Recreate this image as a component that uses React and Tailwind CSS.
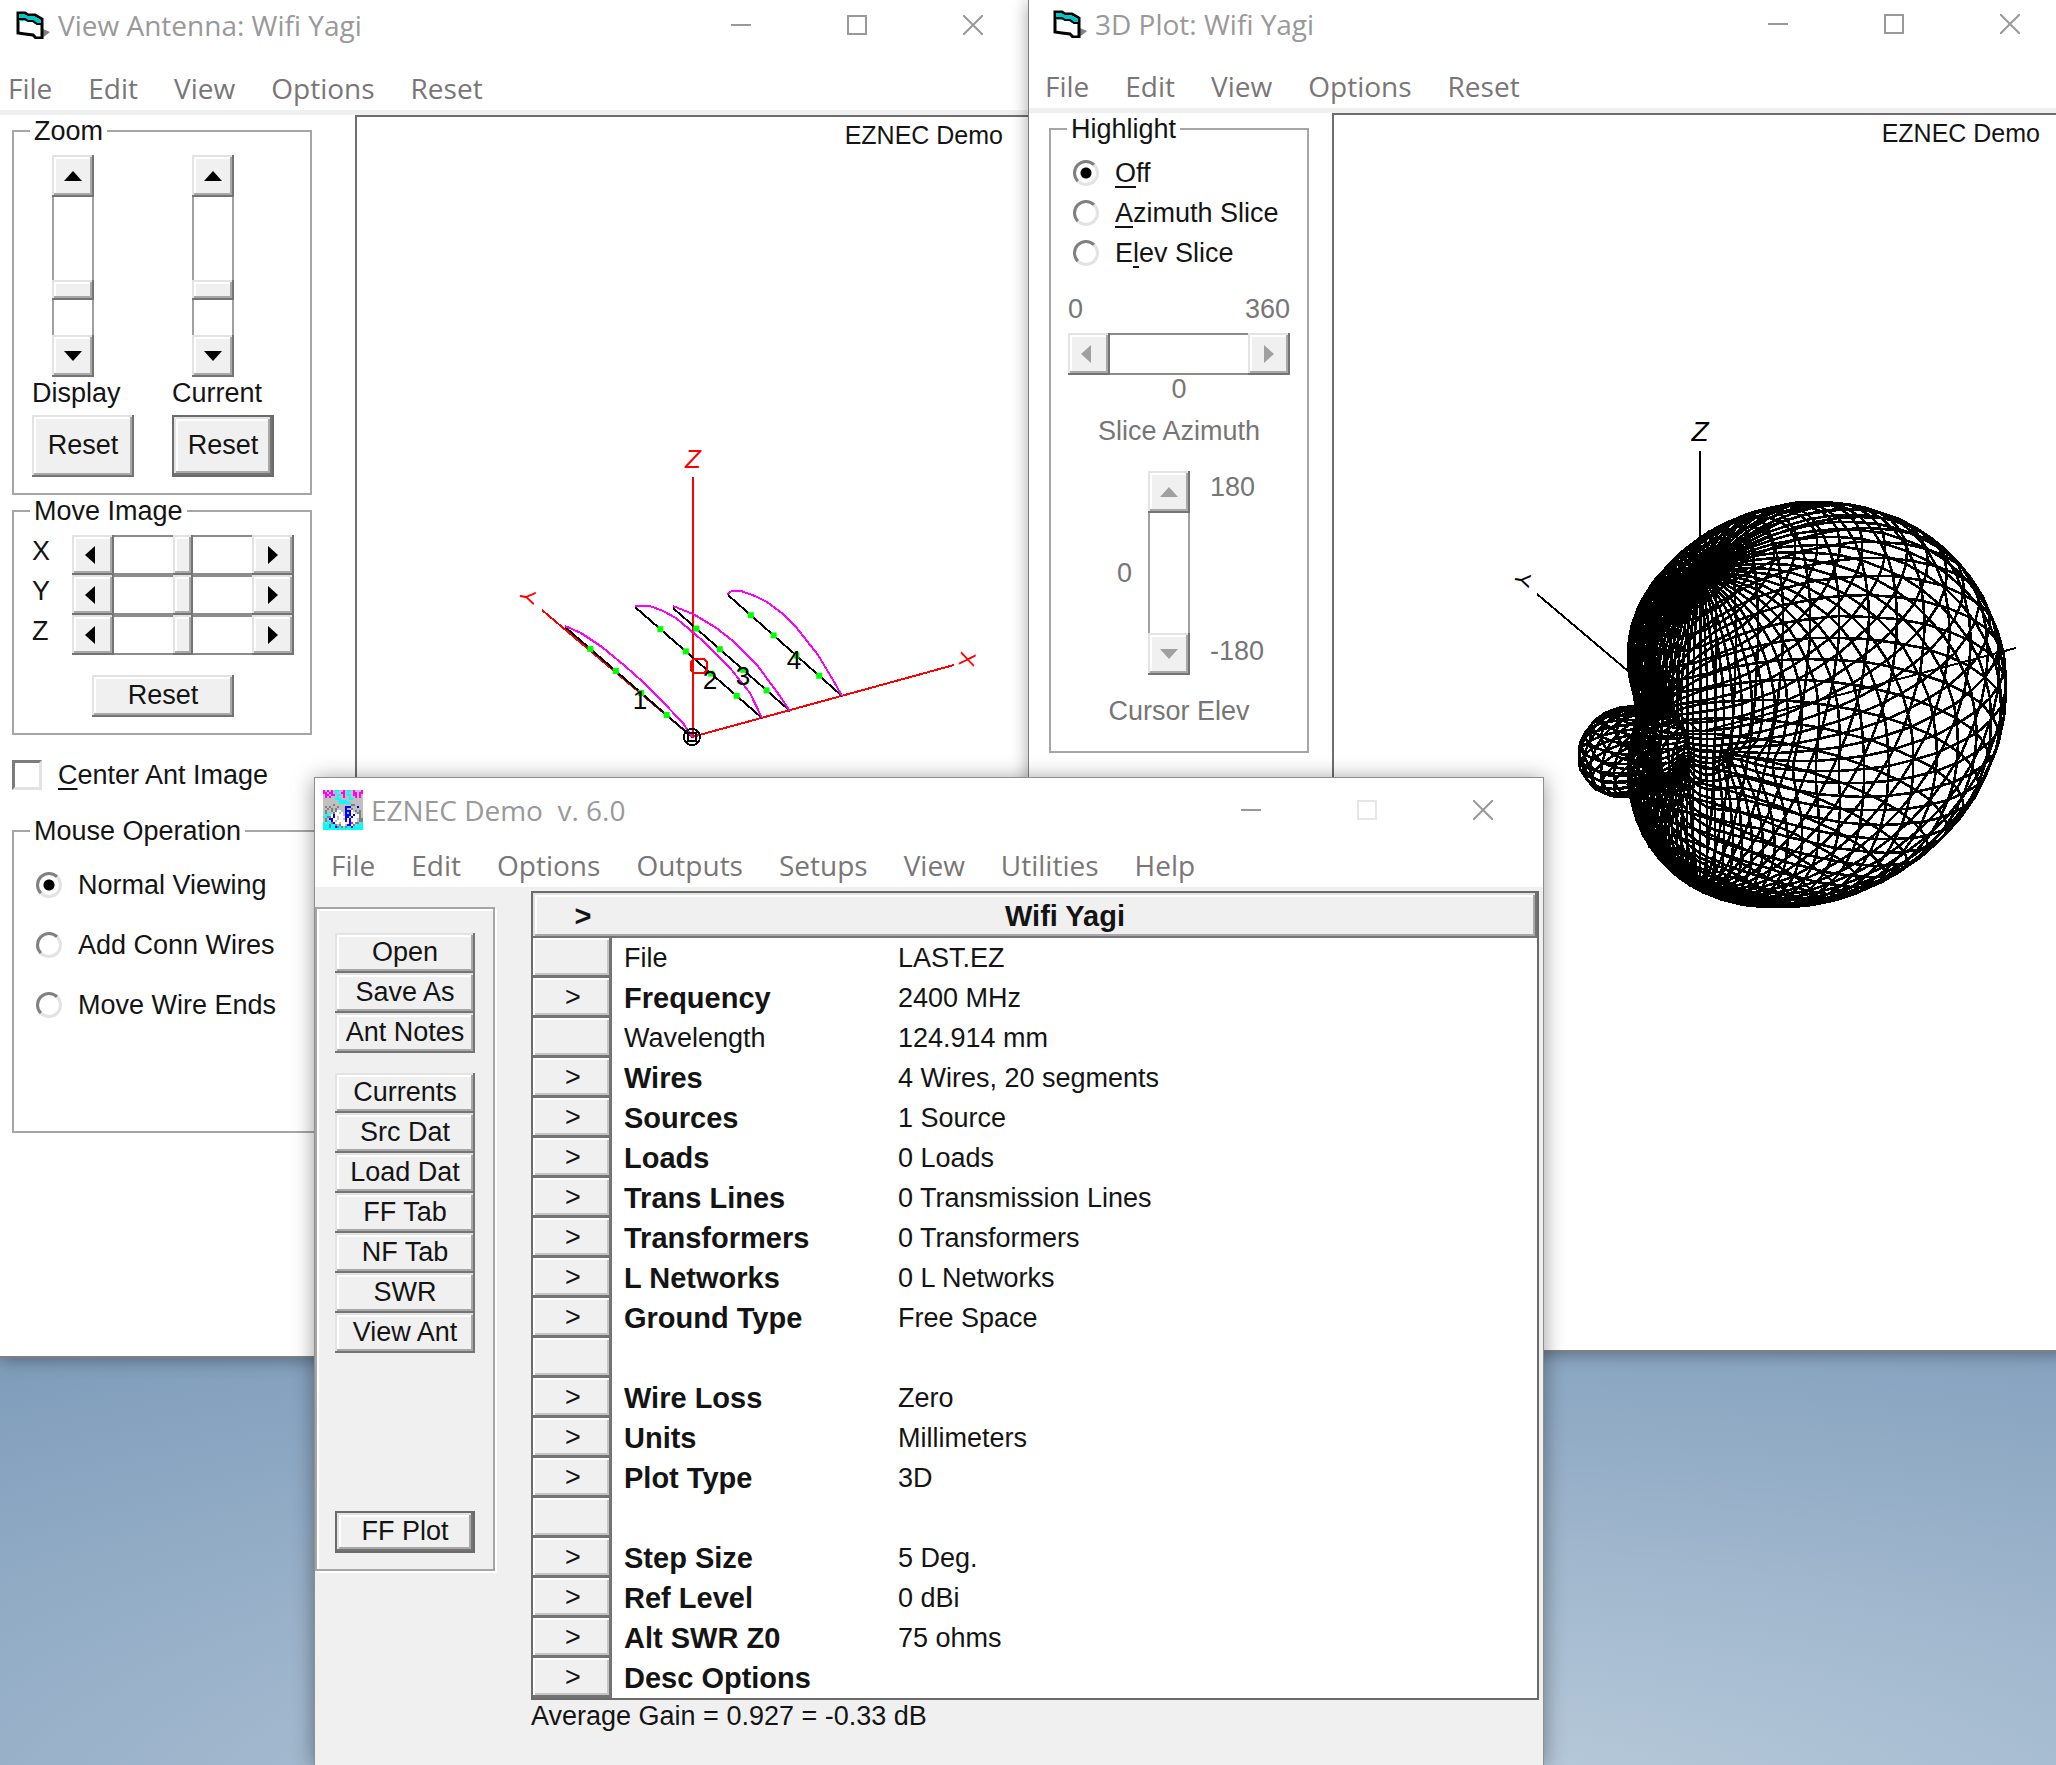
import { clsx } from 'clsx';

const RAISED =
  'bg-[#f0f0f0] shadow-[inset_-2px_-2px_#747474,inset_2px_2px_#e3e3e3,inset_-4px_-4px_#a8a8a8,inset_4px_4px_#ffffff]';

const ARROWS = {
  up: '0,10 9,0 18,10',
  down: '0,0 18,0 9,10',
  left: '10,0 10,18 0,9',
  right: '0,0 10,9 0,18',
};

const SETTINGS = [
  { name: 'File', value: 'LAST.EZ', plain: true },
  { name: 'Frequency', value: '2400 MHz' },
  { name: 'Wavelength', value: '124.914 mm', plain: true },
  { name: 'Wires', value: '4 Wires, 20 segments' },
  { name: 'Sources', value: '1 Source' },
  { name: 'Loads', value: '0 Loads' },
  { name: 'Trans Lines', value: '0 Transmission Lines' },
  { name: 'Transformers', value: '0 Transformers' },
  { name: 'L Networks', value: '0 L Networks' },
  { name: 'Ground Type', value: 'Free Space' },
  { name: '', value: '', plain: true },
  { name: 'Wire Loss', value: 'Zero' },
  { name: 'Units', value: 'Millimeters' },
  { name: 'Plot Type', value: '3D' },
  { name: '', value: '', plain: true },
  { name: 'Step Size', value: '5 Deg.' },
  { name: 'Ref Level', value: '0 dBi' },
  { name: 'Alt SWR Z0', value: '75 ohms' },
  { name: 'Desc Options', value: '' },
];

function FormIcon() {
  return (
    <svg className="h-7 w-[34px] shrink-0" viewBox="0 0 34 28" aria-hidden="true">
      <path d="M27 18l7 3-5 4-3 2z" fill="#808080" />
      <path d="M2 2h7l3 2h7l7 4v19h-6l-3-3-8-1-7-1z" fill="#fff" stroke="#000" strokeWidth="3" />
      <path d="M3 3h5l4 2h6l7 4v4h-6l-3-2-7-1H3z" fill="#00c8c8" />
      <path d="M3 8h6l3 2h5l4 3h5" fill="none" stroke="#000" strokeWidth="2" />
    </svg>
  );
}

// 20x20 bitmap, one letter per colour
const ICON_ROWS = [
  'MgMgMgCCggMgCCgMgggM',
  'MMgMMgCggMMgCggMMgMM',
  'gMMgMMgCCgMgCCgMMgMg',
  'gMgMgggCggMggCggMgMg',
  'ggggggCCCggggCCggggg',
  'ggggggggCCCCgggggggg',
  'ggggggggCCCCCCgggggg',
  'gggggdggggggggddgggg',
  'gdgdgggdgggBBBgggBgg',
  'ggdgdgdggggBggdggggg',
  'gdggdgdwwggBBBwgdgdg',
  'gdgCgdwwgwgBgBwwgddg',
  'gCCgwBwwwwgBBBwBwwdg',
  'CCddwBwgwwwBBgBwwwdg',
  'gdgBBwwgwwgBwBwwwgdd',
  'gdCgBwgwwwwBwBwwwgdd',
  'CgCCdBwwgwwwwBMwddgC',
  'CCCdCCdgdwwgBBwdgCCC',
  'CCCdCCBdCdgdCCBCCCCC',
  'CCCCCCCCCCCCCCCCCCCC',
];
const ICON_COLORS = { M: '#ff00ff', C: '#00ffff', B: '#0000ff', w: '#ffffff', d: '#808080' };

function EznecIcon() {
  return (
    <svg className="size-10 shrink-0" viewBox="0 0 20 20" shapeRendering="crispEdges" aria-hidden="true">
      <rect width="20" height="20" fill="#c0c0c0" />
      {ICON_ROWS.flatMap((row, y) =>
        [...row].map((c, x) =>
          ICON_COLORS[c] ? <rect key={`${x}-${y}`} x={x} y={y} width="1" height="1" fill={ICON_COLORS[c]} /> : null
        )
      )}
    </svg>
  );
}

function TitleBar({ icon, title, className, maxDisabled }) {
  const button = 'flex w-[116px] items-center justify-center';
  return (
    <header className={clsx('flex items-stretch whitespace-pre text-[28px] leading-9 text-[#999999]', className)}>
      <h1 className="flex flex-1 items-center gap-2 font-['Open_Sans',sans-serif] font-normal">
        {icon}
        {title}
      </h1>
      <button type="button" aria-label="Minimize" className={button}>
        <svg className="size-5" viewBox="0 0 20 20" stroke="currentColor" strokeWidth="2">
          <path d="M0 10h20" />
        </svg>
      </button>
      <button
        type="button"
        aria-label="Maximize"
        disabled={maxDisabled}
        className={clsx(button, maxDisabled && 'text-[#e6e6e6]')}
      >
        <svg className="size-5" viewBox="0 0 20 20" fill="none" stroke="currentColor" strokeWidth="2">
          <path d="M1 1h18v18H1z" />
        </svg>
      </button>
      <button type="button" aria-label="Close" className={button}>
        <svg className="size-5" viewBox="0 0 20 20" stroke="currentColor" strokeWidth="2">
          <path d="M0 0l20 20M20 0L0 20" />
        </svg>
      </button>
    </header>
  );
}

function MenuBar({ items, className }) {
  return (
    <nav className={clsx("flex items-center gap-9 font-['Open_Sans',sans-serif] text-[28px] leading-9 text-[#7a7678]", className)}>
      {items.map((item) => (
        <button key={item} type="button">
          {item}
        </button>
      ))}
    </nav>
  );
}

function Group({ legend, className, children }) {
  return (
    <fieldset className={clsx('border-2 border-[#a6a6a6]', className)}>
      <legend className="ml-4 px-1 leading-8">{legend}</legend>
      {children}
    </fieldset>
  );
}

function PushButton({ children, focused, className }) {
  return (
    <button type="button" className={clsx(RAISED, 'pb-0.5', focused && 'border-2 border-[#6b6b6b]', className)}>
      {children}
    </button>
  );
}

function ArrowButton({ dir, disabled, label, className }) {
  const vertical = dir === 'up' || dir === 'down';
  return (
    <button
      type="button"
      aria-label={label}
      disabled={disabled}
      className={clsx(RAISED, 'flex shrink-0 items-center justify-center', className, disabled ? 'text-[#a0a0a0]' : 'text-black')}
    >
      <svg className={vertical ? 'h-2.5 w-[18px]' : 'h-[18px] w-2.5'} fill="currentColor">
        <polygon points={ARROWS[dir]} />
      </svg>
    </button>
  );
}

const THUMB =
  '[&::-webkit-slider-thumb]:appearance-none [&::-webkit-slider-thumb]:bg-[#f0f0f0] [&::-webkit-slider-thumb]:shadow-[inset_-2px_-2px_#747474,inset_2px_2px_#e3e3e3,inset_-4px_-4px_#a8a8a8,inset_4px_4px_#ffffff]';
const NO_THUMB = '[&::-webkit-slider-thumb]:appearance-none [&::-webkit-slider-thumb]:opacity-0';

function VScroll({ label, value, disabled, className }) {
  return (
    <div className={clsx('flex w-[42px] flex-col bg-white shadow-[inset_2px_0_#a0a0a0,inset_-2px_0_#a0a0a0]', className)}>
      <ArrowButton dir="up" label={`${label} up`} disabled={disabled} className="h-[42px] w-full" />
      <input
        type="range"
        aria-label={label}
        defaultValue={value}
        disabled={disabled}
        className={clsx(
          'min-h-0 w-full flex-1 appearance-none bg-transparent [writing-mode:vertical-lr] [&::-webkit-slider-thumb]:h-5 [&::-webkit-slider-thumb]:w-[42px]',
          disabled ? NO_THUMB : THUMB
        )}
      />
      <ArrowButton dir="down" label={`${label} down`} disabled={disabled} className="h-[42px] w-full" />
    </div>
  );
}

function HScroll({ label, value, disabled, className }) {
  return (
    <div className={clsx('flex w-[222px]', className)}>
      <ArrowButton dir="left" label={`${label} left`} disabled={disabled} className="h-full w-[42px] pr-1.5" />
      <input
        type="range"
        aria-label={label}
        defaultValue={value}
        disabled={disabled}
        className={clsx(
          'h-full min-w-0 flex-1 appearance-none border-y-2 border-[#8c8c8c] bg-white [&::-webkit-slider-thumb]:h-10 [&::-webkit-slider-thumb]:w-5',
          disabled ? NO_THUMB : THUMB
        )}
      />
      <ArrowButton dir="right" label={`${label} right`} disabled={disabled} className="h-full w-[42px]" />
    </div>
  );
}

function Radio({ name, checked, children, className }) {
  return (
    <label className={clsx('flex items-center gap-4 whitespace-nowrap pl-1', className)}>
      <input
        type="radio"
        name={name}
        defaultChecked={checked}
        className="size-[26px] shrink-0 appearance-none rounded-full border-3 border-t-[#808080] border-r-[#e3e3e3] border-b-[#e3e3e3] border-l-[#808080] checked:bg-[radial-gradient(circle,#000_5px,transparent_6px)]"
      />
      <span>{children}</span>
    </label>
  );
}

const WIRES = [
  { from: [565, 628], to: [692, 738], current: '565,627 581,634 602,648 625,667 643,683 659,699 683,724 692,738' },
  { from: [635, 608], to: [762, 719], current: '635,607 650,607 663,612 676,619 703,642 730,669 750,694 762,719' },
  { from: [673, 609], to: [790, 712], current: '673,607 693,615 715,628 733,642 757,666 777,693 790,712' },
  { from: [728, 596], to: [842, 697], current: '727,595 732,592 741,592 755,597 767,603 783,615 796,628 818,656 833,681 842,697' },
];

function AntennaDrawing() {
  return (
    <svg className="h-[660px] w-[670px]" viewBox="357 118 670 660" aria-label="Antenna wires and currents">
      <g fill="none" strokeWidth="2" shapeRendering="crispEdges">
        <path d="M693 738V478M692 738L954 666M692 738L542 611" stroke="#ff0000" />
        {WIRES.map(({ from, to, current }) => (
          <g key={current}>
            <path d={`M${from}L${to}`} stroke="#000" />
            <polyline points={current} stroke="#ff00ff" />
          </g>
        ))}
        <path d="M694 660h10l3 3v8l-3 3h-10l-3-3v-8z" stroke="#ff0000" />
        <circle cx="692" cy="738" r="8" stroke="#000" />
        <path d="M688 734h8v8h-8z" stroke="#000" />
      </g>
      {WIRES.flatMap(({ from, to }, i) =>
        [0.2, 0.4, 0.6, 0.8].map((t) => (
          <rect
            key={`${i}-${t}`}
            x={from[0] + (to[0] - from[0]) * t - 3}
            y={from[1] + (to[1] - from[1]) * t - 3}
            width="6"
            height="6"
            fill="#00ff00"
          />
        ))
      )}
      <g fontSize="26" textAnchor="middle">
        <text x="640" y="710">1</text>
        <text x="710" y="690">2</text>
        <text x="743" y="686">3</text>
        <text x="794" y="670">4</text>
      </g>
      <g fontSize="26" textAnchor="middle" fill="#ff0000">
        <text x="693" y="469" fontStyle="italic">Z</text>
        <text transform="translate(520 597) rotate(100)" fontSize="22">Y</text>
        <text transform="translate(960 659) rotate(100)" fontSize="22">X</text>
      </g>
    </svg>
  );
}

// Far-field surface sampled every 5 degrees, projected orthographically
const STEP = 5;
const RADIUS = 331;
const ORIGIN = [1700, 732];

function project(az, el) {
  const a = (az * Math.PI) / 180;
  const e = (el * Math.PI) / 180;
  const x = Math.cos(e) * Math.cos(a);
  const y = Math.cos(e) * Math.sin(a);
  const z = Math.sin(e);
  const broadside = Math.sqrt(Math.max(1 - y * y, 1e-6));
  // the constants keep the nulls from closing completely
  const element = Math.hypot(Math.cos((Math.PI / 2) * y) / broadside, 0.12);
  const array = Math.hypot(0.295 + 0.39 * x + 0.12 * x ** 2 + 0.19 * x ** 3, 0.05 * (1 - x * x));
  const r = RADIUS * Math.sqrt(element * array);
  return [
    Math.round(ORIGIN[0] + r * (0.868 * x - 0.497 * y)),
    Math.round(ORIGIN[1] - r * (0.24 * x + 0.42 * y + 0.86 * z)),
  ];
}

function buildMesh() {
  const lines = [];
  for (let el = -90 + STEP; el < 90; el += STEP) {
    const ring = [];
    for (let az = 0; az < 360; az += STEP) ring.push(project(az, el).join(' '));
    lines.push(`M${ring.join('L')}Z`);
  }
  for (let az = 0; az < 360; az += STEP) {
    const rib = [];
    for (let el = -90; el <= 90; el += STEP) rib.push(project(az, el).join(' '));
    lines.push(`M${rib.join('L')}`);
  }
  return lines.join('');
}

const MESH = buildMesh();

function FarFieldDrawing() {
  return (
    <svg className="h-[900px] w-[710px]" viewBox="1334 115 710 900" aria-label="3D far field pattern">
      <g fill="none" stroke="#000" shapeRendering="crispEdges">
        <path d="M1700 732V451M1700 732L1537 594M1700 732L2016 648" strokeWidth="2" />
        <path d={MESH} strokeWidth="2.6" />
      </g>
      <g fontSize="28" textAnchor="middle">
        <text x="1700" y="441" fontStyle="italic">Z</text>
        <text transform="translate(1515 579) rotate(100)" fontSize="22">Y</text>
      </g>
    </svg>
  );
}

function Canvas({ children, className }) {
  return (
    <section className="relative min-w-0 flex-1 overflow-hidden border-t-2 border-l-2 border-[#6e6e6e] bg-white">
      <p className={clsx('absolute top-0.5 text-[25px] leading-8', className)}>EZNEC Demo</p>
      {children}
    </section>
  );
}

function ViewAntennaWindow() {
  return (
    <section className="absolute top-0 left-0 w-[calc(50%+3px)] border-b-2 border-[#808080] bg-white shadow-[0_2px_16px_rgba(0,0,0,0.35)]">
      <TitleBar icon={<FormIcon />} title="View Antenna: Wifi Yagi" className="h-[50px] pl-4" />
      <MenuBar items={['File', 'Edit', 'View', 'Options', 'Reset']} className="h-15 pt-4 pl-2" />
      <div className="flex min-h-[1246px] border-t-[5px] border-[#f0f0f0]">
        <div className="w-[355px] shrink-0 pl-3">
          <Group legend="Zoom" className="w-[300px] pb-4">
            <div className="mt-2 flex gap-[38px] px-[18px]">
              <div className="flex flex-col">
                <VScroll label="Display zoom" value={70} className="ml-5 h-[222px]" />
                <p className="leading-8">Display</p>
                <PushButton className="mt-1.5 h-[62px] w-[102px]">Reset</PushButton>
              </div>
              <div className="flex flex-col">
                <VScroll label="Current zoom" value={70} className="ml-5 h-[222px]" />
                <p className="leading-8">Current</p>
                <PushButton focused className="mt-1.5 h-[62px] w-[102px]">Reset</PushButton>
              </div>
            </div>
          </Group>
          <Group legend="Move Image" className="w-[300px] pb-4">
            <div className="mt-2 pl-[18px]">
              {['X', 'Y', 'Z'].map((axis) => (
                <div key={axis} className="flex h-10">
                  <span className="w-10 leading-8">{axis}</span>
                  <HScroll label={`Move ${axis}`} value={50} />
                </div>
              ))}
              <PushButton className="mt-5 ml-15 block h-[42px] w-[142px]">Reset</PushButton>
            </div>
          </Group>
          <label className="mt-6 flex items-center gap-4">
            <input
              type="checkbox"
              className="size-[30px] appearance-none border-3 border-t-[#7c7c7c] border-r-[#e3e3e3] border-b-[#e3e3e3] border-l-[#7c7c7c] bg-white"
            />
            <span>
              <u className="underline-offset-4">C</u>enter Ant Image
            </span>
          </label>
          <Group legend="Mouse Operation" className="mt-6 w-[340px] pb-24">
            <div className="mt-2 pl-[18px]">
              <Radio name="mouse" checked className="h-15">Normal Viewing</Radio>
              <Radio name="mouse" className="h-15">Add Conn Wires</Radio>
              <Radio name="mouse" className="h-15">Move Wire Ends</Radio>
            </div>
          </Group>
        </div>
        <Canvas className="right-7">
          <AntennaDrawing />
        </Canvas>
      </div>
    </section>
  );
}

function PlotWindow() {
  return (
    <section className="absolute top-0 -right-3 left-1/2 border-b-2 border-l border-[#808080] bg-white shadow-[0_2px_16px_rgba(0,0,0,0.35)]">
      <TitleBar icon={<FormIcon />} title="3D Plot: Wifi Yagi" className="h-12 pl-6" />
      <MenuBar items={['File', 'Edit', 'View', 'Options', 'Reset']} className="h-15 pt-4 pl-4" />
      <div className="flex min-h-[1242px] border-t-[5px] border-[#f0f0f0]">
        <div className="w-[303px] shrink-0 pl-5">
          <Group legend="Highlight" className="w-[260px] pb-6">
            <div className="mt-2 pl-[18px]">
              <Radio name="highlight" checked className="h-10">
                <u className="underline-offset-4">O</u>ff
              </Radio>
              <Radio name="highlight" className="h-10">
                <u className="underline-offset-4">A</u>zimuth Slice
              </Radio>
              <Radio name="highlight" className="h-10">
                E<u className="underline-offset-4">l</u>ev Slice
              </Radio>
            </div>
            <div className="px-[17px] text-[#767676]">
              <div className="mt-5 flex justify-between leading-8">
                <span>0</span>
                <span>360</span>
              </div>
              <HScroll label="Slice azimuth" value={0} disabled className="mt-2 h-[42px]" />
              <p className="text-center leading-7">0</p>
              <p className="mt-3 text-center leading-8">Slice Azimuth</p>
              <div className="mt-6 flex h-[204px]">
                <span className="w-20 self-center pr-4 text-right">0</span>
                <VScroll label="Cursor elevation" value={50} disabled />
                <div className="flex flex-col justify-between pb-2 pl-5 leading-8">
                  <span>180</span>
                  <span>-180</span>
                </div>
              </div>
              <p className="mt-5 text-center leading-8">Cursor Elev</p>
            </div>
          </Group>
        </div>
        <Canvas className="right-7">
          <FarFieldDrawing />
        </Canvas>
      </div>
    </section>
  );
}

function ButtonStack({ items, className }) {
  return (
    <div className={clsx('flex flex-col', className)}>
      {items.map((item) => (
        <PushButton key={item} className="h-10 w-full">
          {item}
        </PushButton>
      ))}
    </div>
  );
}

function SettingsTable() {
  return (
    <table className="w-full table-fixed border-collapse border-2 border-[#6b6b6b] bg-white text-left">
      <colgroup>
        <col className="w-20" />
        <col className="w-[274px]" />
        <col />
      </colgroup>
      <thead>
        <tr>
          <th colSpan={3} className="p-0">
            <button type="button" className={clsx(RAISED, 'flex h-[45px] w-full items-center text-[29px] font-bold')}>
              <span className="w-[100px]">&gt;</span>
              <span className="flex-1 pr-10">Wifi Yagi</span>
            </button>
          </th>
        </tr>
      </thead>
      <tbody>
        {SETTINGS.map(({ name, value, plain }, i) => (
          <tr key={i} className="h-10">
            <td className="p-0">
              <button
                type="button"
                aria-label={name || 'Blank'}
                className="block h-10 w-full border-r-3 border-b-3 border-[#747474] bg-[#f0f0f0] pl-1 shadow-[inset_2px_2px_#ffffff,inset_-2px_-2px_#c4c4c4]"
              >
                {plain ? '' : '>'}
              </button>
            </td>
            <th scope="row" className={clsx('py-0 pl-3', plain ? 'font-normal' : 'text-[29px] font-bold')}>
              {name}
            </th>
            <td className="py-0 pl-3">{value}</td>
          </tr>
        ))}
      </tbody>
    </table>
  );
}

function MainWindow() {
  return (
    <section className="absolute top-[777px] right-[calc(25%-2px)] bottom-0 left-[314px] flex flex-col border-x border-t border-[#8e8e8e] bg-white shadow-[0_2px_20px_rgba(0,0,0,0.4)]">
      <TitleBar icon={<EznecIcon />} title="EZNEC Demo  v. 6.0" maxDisabled className="h-16 pr-0.5 pl-2" />
      <MenuBar
        items={['File', 'Edit', 'Options', 'Outputs', 'Setups', 'View', 'Utilities', 'Help']}
        className="h-[45px] pl-4"
      />
      <div className="flex flex-1 bg-[#f0f0f0]">
        <div className="mt-5 flex h-[664px] w-[180px] shrink-0 flex-col border-2 border-[#a6a6a6] px-[18px] shadow-[inset_2px_2px_#ffffff,2px_2px_#ffffff]">
          <ButtonStack items={['Open', 'Save As', 'Ant Notes']} className="mt-6" />
          <ButtonStack
            items={['Currents', 'Src Dat', 'Load Dat', 'FF Tab', 'NF Tab', 'SWR', 'View Ant']}
            className="mt-5"
          />
          <PushButton focused className="mt-auto mb-4 h-[42px] w-full">FF Plot</PushButton>
        </div>
        <div className="min-w-0 flex-1 pt-1 pr-1 pl-9">
          <SettingsTable />
          <p className="leading-8">Average Gain = 0.927 = -0.33 dB</p>
        </div>
      </div>
    </section>
  );
}

export default function App() {
  return (
    <main className="relative min-h-screen overflow-hidden bg-[radial-gradient(ellipse_120%_40%_at_62%_105%,#c2d2e0,#7494b5)] font-['Liberation_Sans',Arial,sans-serif] text-[27px] leading-8 text-[#141414]">
      <ViewAntennaWindow />
      <PlotWindow />
      <MainWindow />
    </main>
  );
}
